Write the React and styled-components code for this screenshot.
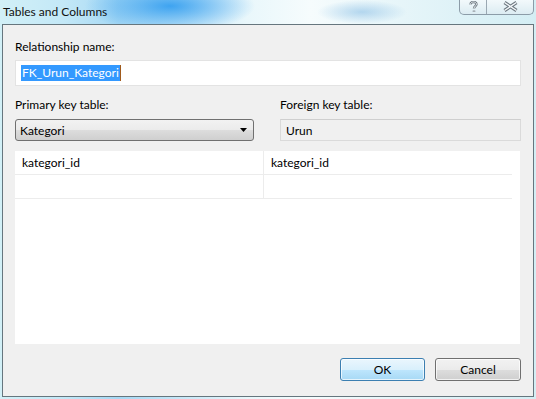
import React from 'react';
import styled, { createGlobalStyle } from 'styled-components';

const Global = createGlobalStyle`
  html, body {
    margin: 0;
    padding: 0;
    width: 536px;
    height: 399px;
    overflow: hidden;
  }
  body {
    font-family: "Segoe UI", Lato, "Noto Sans", sans-serif;
    font-size: 12px;
    color: #000;
  }
`;

const Window = styled.div`
  width: 536px;
  height: 399px;
  box-sizing: border-box;
  display: flex;
  flex-direction: column;
  padding: 0 2px 2px 2px;
  background:
    radial-gradient(ellipse 85px 26px at 170px 6px, rgba(55, 160, 240, 0.95), rgba(55, 160, 240, 0) 100%),
    radial-gradient(ellipse 45px 12px at 362px 12px, rgba(120, 180, 225, 0.5), rgba(120, 180, 225, 0) 100%),
    linear-gradient(90deg, #d2f0f7 0%, #c3e8f7 12%, #a6d8f4 22%, #e9f7fb 46%, #f6fcfd 58%, #e6f5f9 75%, #d4eef4 100%);
`;

const TitleBar = styled.div`
  height: 24px;
  display: flex;
  align-items: flex-start;
  justify-content: space-between;
`;

const Title = styled.div`
  padding: 4px 0 0 1px;
  line-height: 16px;
  color: #111;
`;

const Caption = styled.div`
  display: flex;
  margin-top: -1px;
  height: 15px;
  border: 1px solid #8c9ca8;
  border-top: none;
  border-radius: 0 0 5px 5px;
  background: linear-gradient(#f4fafc, #dcecf2);
  overflow: hidden;
`;

const CaptionButton = styled.div`
  width: ${p => p.w}px;
  display: flex;
  align-items: center;
  justify-content: center;
  & + & {
    border-left: 1px solid #9aa8b2;
  }
`;

const Client = styled.div`
  flex: 1;
  display: flex;
  flex-direction: column;
  border: 1px solid #66767e;
  background: #f0f0f0;
  padding: 14px 12px 0 12px;
`;

const Label = styled.div`
  line-height: 16px;
  margin-bottom: ${p => p.gap || 5}px;
`;

const TextBox = styled.div`
  height: 26px;
  box-sizing: border-box;
  border: 1px solid #e3e3e3;
  background: #fff;
  display: flex;
  align-items: center;
  padding-left: 5px;
`;

const Selected = styled.span`
  background: #3399ff;
  color: #fff;
  line-height: 16px;
  padding: 0 1px;
  border-right: 1px solid #a05a1c;
`;

const Columns = styled.div`
  display: flex;
  margin-top: 11px;
  gap: 26px;
`;

const Column = styled.div`
  display: flex;
  flex-direction: column;
  width: ${p => p.w}px;
`;

const Combo = styled.div`
  height: 22px;
  box-sizing: border-box;
  border: 1px solid #707070;
  border-radius: 3px;
  background: linear-gradient(#f2f2f2 0%, #ebebeb 50%, #dddddd 51%, #cfcfcf 100%);
  display: flex;
  align-items: center;
  justify-content: space-between;
  padding: 0 6px 0 4px;
`;

const ReadOnly = styled.div`
  height: 22px;
  box-sizing: border-box;
  border: 1px solid #dadada;
  border-top-color: #cfcfcf;
  background: #f0f0f0;
  display: flex;
  align-items: center;
  padding-left: 5px;
`;

const Grid = styled.div`
  margin-top: 10px;
  height: 193px;
  width: 505px;
  background: #fff;
`;

const Row = styled.div`
  display: flex;
  width: 497px;
  height: 23px;
  border-bottom: 1px solid #ececec;
`;

const Cell = styled.div`
  width: 248px;
  box-sizing: border-box;
  padding-left: 7px;
  display: flex;
  align-items: center;
  & + & {
    border-left: 1px solid #ececec;
  }
`;

const Footer = styled.div`
  display: flex;
  justify-content: flex-end;
  gap: 10px;
  margin-top: 14px;
`;

const Button = styled.div`
  width: ${p => p.w}px;
  height: 23px;
  box-sizing: border-box;
  border: 1px solid ${p => (p.primary ? '#3c7fb1' : '#707070')};
  border-radius: 3px;
  background: ${p =>
    p.primary
      ? 'linear-gradient(#eaf6fd 0%, #d9f0fc 50%, #bee6fd 51%, #a7d9f5 100%)'
      : 'linear-gradient(#f2f2f2 0%, #ebebeb 50%, #dddddd 51%, #cfcfcf 100%)'};
  box-shadow: inset 0 0 0 1px rgba(255, 255, 255, 0.7);
  display: flex;
  align-items: center;
  justify-content: center;
`;

const Arrow = () => (
  <svg width="7" height="4" viewBox="0 0 7 4">
    <path d="M0 0H7L3.5 4Z" fill="#000" />
  </svg>
);

const HelpIcon = () => (
  <svg width="9" height="12" viewBox="0 0 9 12">
    <path d="M1.5 3.5C1.5 1.5 3 1 4.5 1S7.5 1.8 7.5 3.3C7.5 5 5 5 5 7.5M5 9.5v1.5" fill="none" stroke="#6d7880" strokeWidth="2.4" />
    <path d="M1.5 3.5C1.5 1.5 3 1 4.5 1S7.5 1.8 7.5 3.3C7.5 5 5 5 5 7.5M5 9.5v1.5" fill="none" stroke="#f4f8fa" strokeWidth="0.9" />
  </svg>
);

const CloseIcon = () => (
  <svg width="15" height="11" viewBox="0 0 15 11">
    <path d="M1.5 1.5L13.5 9.5M13.5 1.5L1.5 9.5" fill="none" stroke="#6d7880" strokeWidth="3.4" />
    <path d="M1.5 1.5L13.5 9.5M13.5 1.5L1.5 9.5" fill="none" stroke="#f4f8fa" strokeWidth="1.4" />
  </svg>
);

const rows = [['kategori_id', 'kategori_id'], ['', '']];

export default function App() {
  return (
    <>
      <Global />
      <Window>
        <TitleBar>
          <Title>Tables and Columns</Title>
          <Caption>
            <CaptionButton w={26}><HelpIcon /></CaptionButton>
            <CaptionButton w={46}><CloseIcon /></CaptionButton>
          </Caption>
        </TitleBar>
        <Client>
          <Label>Relationship name:</Label>
          <TextBox>
            <Selected>FK_Urun_Kategori</Selected>
          </TextBox>
          <Columns>
            <Column w={239}>
              <Label gap={6}>Primary key table:</Label>
              <Combo>
                <span>Kategori</span>
                <Arrow />
              </Combo>
            </Column>
            <Column w={241}>
              <Label gap={6}>Foreign key table:</Label>
              <ReadOnly>Urun</ReadOnly>
            </Column>
          </Columns>
          <Grid>
            {rows.map((r, i) => (
              <Row key={i}>
                {r.map((c, j) => (
                  <Cell key={j}>{c}</Cell>
                ))}
              </Row>
            ))}
          </Grid>
          <Footer>
            <Button primary w={85}>OK</Button>
            <Button w={86}>Cancel</Button>
          </Footer>
        </Client>
      </Window>
    </>
  );
}
